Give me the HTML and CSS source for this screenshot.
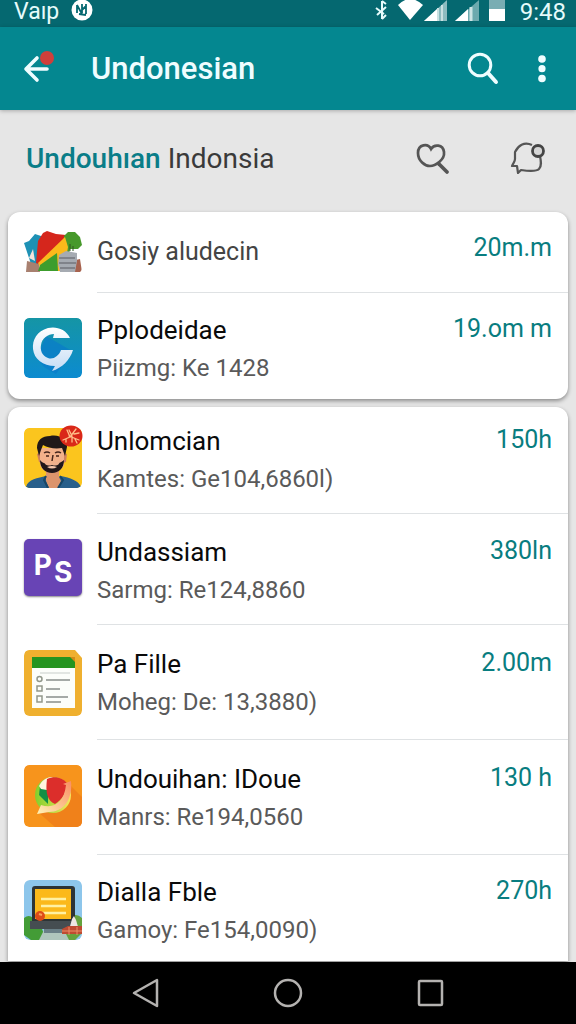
FILE: index.html
```html
<!DOCTYPE html>
<html lang="id">
<head>
<meta charset="utf-8">
<meta name="viewport" content="width=device-width, initial-scale=1">
<title>Undonesian</title>
<link rel="stylesheet" href="styles.css">
</head>
<body>
<div class="status">
  <span class="carrier">Vaıp</span>
  <svg class="badge" width="22" height="22" viewBox="0 0 22 22" aria-hidden="true"><circle cx="11" cy="10" r="10.5" fill="#fff"/><path d="M6 5v8M6 5l5 9M11 4v9M15 4v10M11 10l4-4M8 14l7 1" fill="none" stroke="#056870" stroke-width="1.8"/></svg>
  <svg class="signals" width="132" height="24" viewBox="0 0 132 24" aria-hidden="true">
    <path d="M2 8l8 6M12 7l-9 8M8 1v18M8 1l4 3M8 19l4-4" fill="none" stroke="#e6fbfb" stroke-width="2"/>
    <path d="M24 5Q36-7 49 5L36 20Z" fill="#fff"/>
    <path d="M50 21L73 0v21z" fill="#8dbcc0"/><path d="M50 21L63 9v12z" fill="#fff"/><path d="M64 8v13M68 5v16" stroke="#c9e1e2" stroke-width="2"/>
    <path d="M81 21L105 0v21z" fill="#6ca9ae"/><path d="M81 21L94 9v12z" fill="#fff"/><path d="M97 7v14" stroke="#cde4e5" stroke-width="3"/>
    <path d="M115 0h16v10h-16z" fill="#79adb3"/><path d="M115 9h16v12h-16z" fill="#fff"/>
  </svg>
  <span class="clock">9:48</span>
</div>
<header class="appbar">
  <button class="icon-btn" aria-label="Back"><svg width="32" height="36" viewBox="0 0 32 36"><path d="M24 18H4M14 7L3 18l11 11" fill="none" stroke="#effdff" stroke-width="3.6" stroke-linecap="round" stroke-linejoin="round"/><circle cx="24" cy="7" r="7" fill="#cf3f3b"/></svg></button>
  <h1 class="appbar-title">Undonesian</h1>
  <button class="icon-btn" aria-label="Search"><svg width="32" height="34" viewBox="0 0 32 34"><circle cx="13" cy="13" r="10.8" fill="none" stroke="#effdff" stroke-width="3"/><path d="M21 21l8 9" stroke="#effdff" stroke-width="4" stroke-linecap="round"/></svg></button>
  <button class="icon-btn more" aria-label="More options"><svg width="12" height="30" viewBox="0 0 12 30"><g fill="#effdff"><circle cx="6" cy="5" r="3.8"/><circle cx="6" cy="14.700" r="3.600"/><circle cx="6" cy="24.500" r="3.800"/></g></svg></button>
</header>
<main class="page">
  <section class="subhead">
    <h2 class="subhead-title"><strong>Undouhıan</strong> Indonsia</h2>
    <button class="icon-btn" aria-label="Search favourites"><svg width="36" height="36" viewBox="0 0 36 36"><path d="M17 8C14 2 4 3 4 12c0 8 7 13 12 13s15-6 14-14C29 3 20 3 17 8Z" fill="none" stroke="#555" stroke-width="2.700"/><path d="M25 23l8 8" stroke="#555" stroke-width="3.800" stroke-linecap="round"/></svg></button>
    <button class="icon-btn alerts" aria-label="Notifications"><svg width="36" height="36" viewBox="0 0 36 36"><path d="M22 4C14 0 8 5 5 11v7c0 3-2 4-3 7h5l1 7 3-3c7 1 15 2 18-1 3-3 2-8 1-13" fill="none" stroke="#555" stroke-width="2.200" stroke-linejoin="round"/><circle cx="28" cy="10" r="5.500" fill="#d6d6d6" stroke="#454545" stroke-width="2.800"/></svg></button>
  </section>

  <ul class="card">
    <li class="row row-single">
      <svg class="app-icon" width="58" height="42" viewBox="0 0 58 42" aria-hidden="true">
        <path d="M0 12l5-2 6-7 6 2v28H7L2 18z" fill="#1e91b5"/><path d="M5 27l4-9 2 12z" fill="#f5e3dc"/>
        <path d="M3 30l12 3 1 8H2z" fill="#a88070"/>
        <path d="M12 32l2-22 5-8 4-2 9 3 10 1-4 10-21 20z" fill="#d5261c"/>
        <path d="M40 5l4-4 7 0 5 5 2 8-4 4h-8l-1 5-5-2z" fill="#47992b"/>
        <path d="M41 6l3 10-4 24H18l-4-8z" fill="#fbb91b"/><path d="M16 34l17-12 1 18H14z" fill="#3c9d2d"/>
        <path d="M47 30l9-2 2 13H44z" fill="#a7624e"/>
        <path d="M35 24l7-4 11 2v8l-2 11H36l-2-8z" fill="#a6abb2"/><path d="M35 27h16M35 32h17M36 37h15" stroke="#74777e" stroke-width="1.500"/><path d="M46 20v-7M49 20v-5" stroke="#315720" stroke-width="1"/>
      </svg>
      <div class="row-body">
        <div class="row-text"><h3 class="row-title">Gosiy aludecin</h3></div>
        <span class="amount">20m.m</span>
      </div>
    </li>
    <li class="row row-last">
      <svg class="app-icon" width="58" height="60" viewBox="0 0 58 60" aria-hidden="true">
        <defs><linearGradient id="sea" x2="0" y2="1"><stop stop-color="#1595a5"/><stop offset="1" stop-color="#0c8bd0"/></linearGradient><linearGradient id="silver" x2="0" y2="1"><stop stop-color="#fff"/><stop offset="1" stop-color="#c5dcf5"/></linearGradient></defs>
        <rect width="58" height="60" rx="5" fill="url(#sea)"/><path d="M22 18L48 33 32 56 20 49 13 40z" fill="#0878cc" opacity=".6"/>
        <path d="M46 20C42 11 32 8 24 10 13 13 8 22 9 31c1 10 10 17 22 17l-3 5c10-3 18-11 21-21H37c-2 6-8 10-13 8-6-2-8-8-7-13 1-7 7-11 13-11l-1 4z" fill="url(#silver)"/>
      </svg>
      <div class="row-body">
        <div class="row-text"><h3 class="row-title">Pplodeidae</h3><p class="row-sub">Piizmg: Ke 1428</p></div>
        <span class="amount">19.om m</span>
      </div>
    </li>
  </ul>

  <ul class="card card-open">
    <li class="row row-first">
      <svg class="app-icon" width="58" height="60" viewBox="0 0 58 60" aria-hidden="true">
        <rect width="58" height="60" rx="5" fill="#fbc51e"/>
        <path d="M2 59c2-8 12-9 20-11l7 4 8-4c9 2 17 4 20 11l-3 1H4z" fill="#285f8b"/><path d="M22 41h13v8l2 4-3 7H25l-3-7z" fill="#dc946c"/><path d="M22 48l-2 4 4 8M36 48l3 4-5 8" fill="none" stroke="#174666" stroke-width="2"/>
        <path d="M15 25l-2 1 2 8 4 1h20l3-1 1-8-3-1z" fill="#ce805c"/><path d="M16 20h24v17c-4 9-20 11-24 0z" fill="#f2b08a"/>
        <path d="M16 32c4 5 7 3 12 3s8 1 12-3c0 8-5 13-12 13s-12-5-12-13z" fill="#20171a"/><path d="M20 33q8 3 16 0-1 6-8 4-7 2-8-4z" fill="#efb08e"/><path d="M23 39q5-2 10 0-5 3-10 0z" fill="#f7c7ae"/>
        <path d="M15 28l-2-8c0-8 5-12 13-12 10-2 18 4 17 11l-2 9-3-8c-7 1-14 0-19-3l-2 5z" fill="#201819"/>
        <path d="M20 25q3-2 6 0M31 25q3-2 6 0M22 28h3M32 28h3M29 27l-1 6" fill="none" stroke="#44251d" stroke-width="1.500"/>
      </svg>
      <svg class="pin" width="24" height="22" viewBox="0 0 24 22" aria-hidden="true"><ellipse cx="12" cy="11" rx="11.500" ry="10.500" fill="#da2819"/><path d="M4 15l7-3-3-7M11 12l6-8M10 11l10 4M13 17v-6l-3-6M15 9l5-1M16 14l2 4M7 14v3" fill="none" stroke="#ffc08a" stroke-width="1.300" stroke-linecap="round"/></svg>
      <div class="row-body">
        <div class="row-text"><h3 class="row-title">Unlomcian</h3><p class="row-sub">Kamtes: Ge104,6860l)</p></div>
        <span class="amount">150h</span>
      </div>
    </li>
    <li class="row row-compact">
      <div class="app-icon tile-ps" aria-hidden="true"><b class="tile-p">P</b><b class="tile-s">S</b></div>
      <div class="row-body">
        <div class="row-text"><h3 class="row-title">Undassiam</h3><p class="row-sub">Sarmg: Re124,8860</p></div>
        <span class="amount">380ln</span>
      </div>
    </li>
    <li class="row">
      <svg class="app-icon" width="58" height="66" viewBox="0 0 58 66" aria-hidden="true">
        <path d="M5 0h46l7 8v52q0 6-6 6H6q-6 0-6-6V6q0-6 5-6z" fill="#efb02f"/><path d="M8 8h43v50H8z" fill="#fcfefa"/><path d="M8 7h39l4 4v7H8z" fill="#24941f"/><path d="M46 7l5 5V7z" fill="#d38b16"/>
        <path d="M16 23h30" stroke="#dadeda" stroke-width="1.500"/><path d="M22 30h24M22 39h14M22 47h22M22 52h15" stroke="#a5aaa6" stroke-width="1.800"/><g fill="none" stroke="#92988b" stroke-width="1.500"><circle cx="15.500" cy="29" r="2.500"/><path d="M13 36h5v5h-5zM13 46h5v6h-5z"/></g>
      </svg>
      <div class="row-body">
        <div class="row-text"><h3 class="row-title">Pa Fille</h3><p class="row-sub">Moheg: De: 13,3880)</p></div>
        <span class="amount">2.00m</span>
      </div>
    </li>
    <li class="row">
      <svg class="app-icon" width="58" height="62" viewBox="0 0 58 62" aria-hidden="true">
        <defs><linearGradient id="lime" x2="1"><stop stop-color="#82cf2c"/><stop offset="1" stop-color="#f8e75d"/></linearGradient><linearGradient id="peach" x2="1" y1="1"><stop stop-color="#fff3b6"/><stop offset="1" stop-color="#f98d63"/></linearGradient></defs>
        <rect width="58" height="62" rx="5" fill="#f7941c"/><path d="M46 20l12 12v25q0 5-5 5H31L14 47z" fill="#f0811a"/>
        <circle cx="29" cy="30" r="18" fill="url(#lime)"/><path d="M16 21h8v18l-9-9z" fill="#139045"/><path d="M15 21c3-6 8-9 14-9l-6 13-6-1z" fill="#fff4df"/>
        <path d="M23 14c8-4 16-1 20 4 0 9-5 17-12 21-7-3-10-10-8-25z" fill="#dc2e2b"/><path d="M47 16c2 19-8 31-22 31l-12 2 4-9c13 4 23-2 25-20l-3-1z" fill="url(#peach)"/>
      </svg>
      <div class="row-body">
        <div class="row-text"><h3 class="row-title">Undouihan: IDoue</h3><p class="row-sub">Manrs: Re194,0560</p></div>
        <span class="amount">130 h</span>
      </div>
    </li>
    <li class="row row-last">
      <svg class="app-icon" width="58" height="60" viewBox="0 0 58 60" aria-hidden="true">
        <rect width="58" height="60" rx="6" fill="#8dc6eb"/><path d="M0 38q5-4 9 0l8 8 5 14H7l-7-5z" fill="#439c36"/><path d="M48 36q5-3 10 2v15l-7 7H29V46h18z" fill="#64a33e"/><path d="M20 50h20l5 10H15z" fill="#afc6bd"/>
        <rect x="8" y="6" width="43" height="38" rx="3" fill="#2d3436"/><path d="M11 9h36v30H11z" fill="#fbb91b"/><path d="M17 19h25M17 26h25M17 33h25" stroke="#fff1a3" stroke-width="2.500"/>
        <path d="M6 41h43l-2 8H6z" fill="#454d51"/><path d="M20 49h18v4H20z" fill="#697f87"/><circle cx="16" cy="36" r="5" fill="#de4c18"/><path d="M15 34l3 1" stroke="#fba35c" stroke-width="2"/>
        <path d="M45 50l3-11 2-3 2 4 3 10z" fill="#eee7e3"/><path d="M38 49l6-3h14v8H38z" fill="#bf4b32"/><path d="M38 51h20M45 47v8M53 47v8" stroke="#eb8f68" stroke-width="1"/>
      </svg>
      <div class="row-body">
        <div class="row-text"><h3 class="row-title">Dialla Fble</h3><p class="row-sub">Gamoy: Fe154,0090)</p></div>
        <span class="amount">270h</span>
      </div>
    </li>
  </ul>
</main>
<nav class="navbar" aria-label="System">
  <button class="icon-btn" aria-label="Back"><svg width="30" height="32" viewBox="0 0 30 32"><path d="M26 3v26L3 16z" fill="none" stroke="#b4b2b0" stroke-width="2.500" stroke-linejoin="round"/></svg></button>
  <button class="icon-btn" aria-label="Home"><svg width="30" height="32" viewBox="0 0 30 32"><circle cx="15" cy="16" r="13" fill="none" stroke="#b4b2b0" stroke-width="2.500"/></svg></button>
  <button class="icon-btn" aria-label="Recent apps"><svg width="30" height="32" viewBox="0 0 30 32"><rect x="4" y="4" width="23" height="24" rx="1" fill="none" stroke="#b4b2b0" stroke-width="2.500"/></svg></button>
</nav>
</body>
</html>
```

FILE: styles.css
```css
* { box-sizing: border-box; }
body {
  margin: 0;
  min-height: 100vh;
  display: flex;
  flex-direction: column;
  background: #e6e6e6;
  font-family: Roboto, "Noto Sans", sans-serif;
}
h1, h2, h3, p, ul { margin: 0; padding: 0; }
ul { list-style: none; }
svg { display: block; flex: none; }
.icon-btn { border: 0; padding: 0; background: none; flex: none; }

.status {
  display: flex;
  height: 27px;
  padding: 0 10px 0 14px;
  background: #056870;
  color: #e6fbfb;
  font-size: 22px;
  line-height: 24px;
}
.carrier { font-size: 23px; }
.badge { margin-left: 12px; }
.signals { margin-left: auto; margin-right: 14px; }
.clock { font-size: 24px; }

.appbar {
  display: flex;
  align-items: center;
  height: 83px;
  padding: 0 28px 0 23px;
  background: #048790;
  color: #effdff;
  box-shadow: 0 1px 4px #0004;
}
.appbar-title {
  flex: 1;
  margin-left: 36px;
  font: 500 31px/40px Roboto, sans-serif;
}
.more { margin-left: 44px; }
.appbar .more { margin-left: 37px; }

.page { flex: 1; padding: 0 8px; }
.subhead { display: flex; align-items: center; height: 102px; padding: 0 22px 4px 18px; }
.subhead-title { flex: 1; font-size: 28px; font-weight: 400; line-height: 36px; color: #3a3a3a; }
.subhead-title strong { font-weight: 500; color: #0a7d88; }
.alerts { margin-left: 60px; }

.card {
  margin-bottom: 8px;
  background: #fff;
  border-radius: 12px;
  box-shadow: 0 2px 4px #0006;
}
.card-open { margin-bottom: 0; border-radius: 12px 12px 0 0; }

.row { position: relative; display: flex; padding-left: 16px; }
.app-icon { margin-top: 25px; border-radius: 5px; }
.row-body {
  flex: 1;
  display: flex;
  justify-content: space-between;
  margin-left: 15px;
  padding: 20px 16px 18px 0;
  border-bottom: 1px solid #dfe2e4;
}
.row-title { font-size: 26px; font-weight: 400; line-height: 38px; color: #0a0a0a; }
.row-sub { font-size: 24px; line-height: 38px; color: #5a5a5a; }
.amount { font-size: 25px; line-height: 36px; color: #087d80; }

.row-single .app-icon { margin-top: 19px; }
.row-single .row-body { padding-top: 20px; padding-bottom: 20px; }
.row-single .row-title { font-size: 25px; line-height: 40px; color: #444; }
.row-single .amount { line-height: 32px; }
.row-first .app-icon { margin-top: 21px; }
.row-first .row-body { padding-top: 15px; padding-bottom: 15px; }
.row-compact .row-body { padding-top: 19px; padding-bottom: 15px; }
.row-last .row-body { padding-top: 18px; padding-bottom: 12px; border-bottom: 0; }

.pin { position: absolute; left: 51px; top: 18px; }
.tile-ps {
  display: flex;
  justify-content: center;
  gap: 2px;
  width: 58px;
  height: 57px;
  background: #6844b5;
  box-shadow: 0 1px 2px #0007;
  color: #fff;
  font: 28px/52px Inter, sans-serif;
}
.tile-s { padding-top: 7px; }

.navbar {
  display: flex;
  justify-content: center;
  align-items: center;
  gap: 112px;
  height: 62px;
  background: #000;
}
```
